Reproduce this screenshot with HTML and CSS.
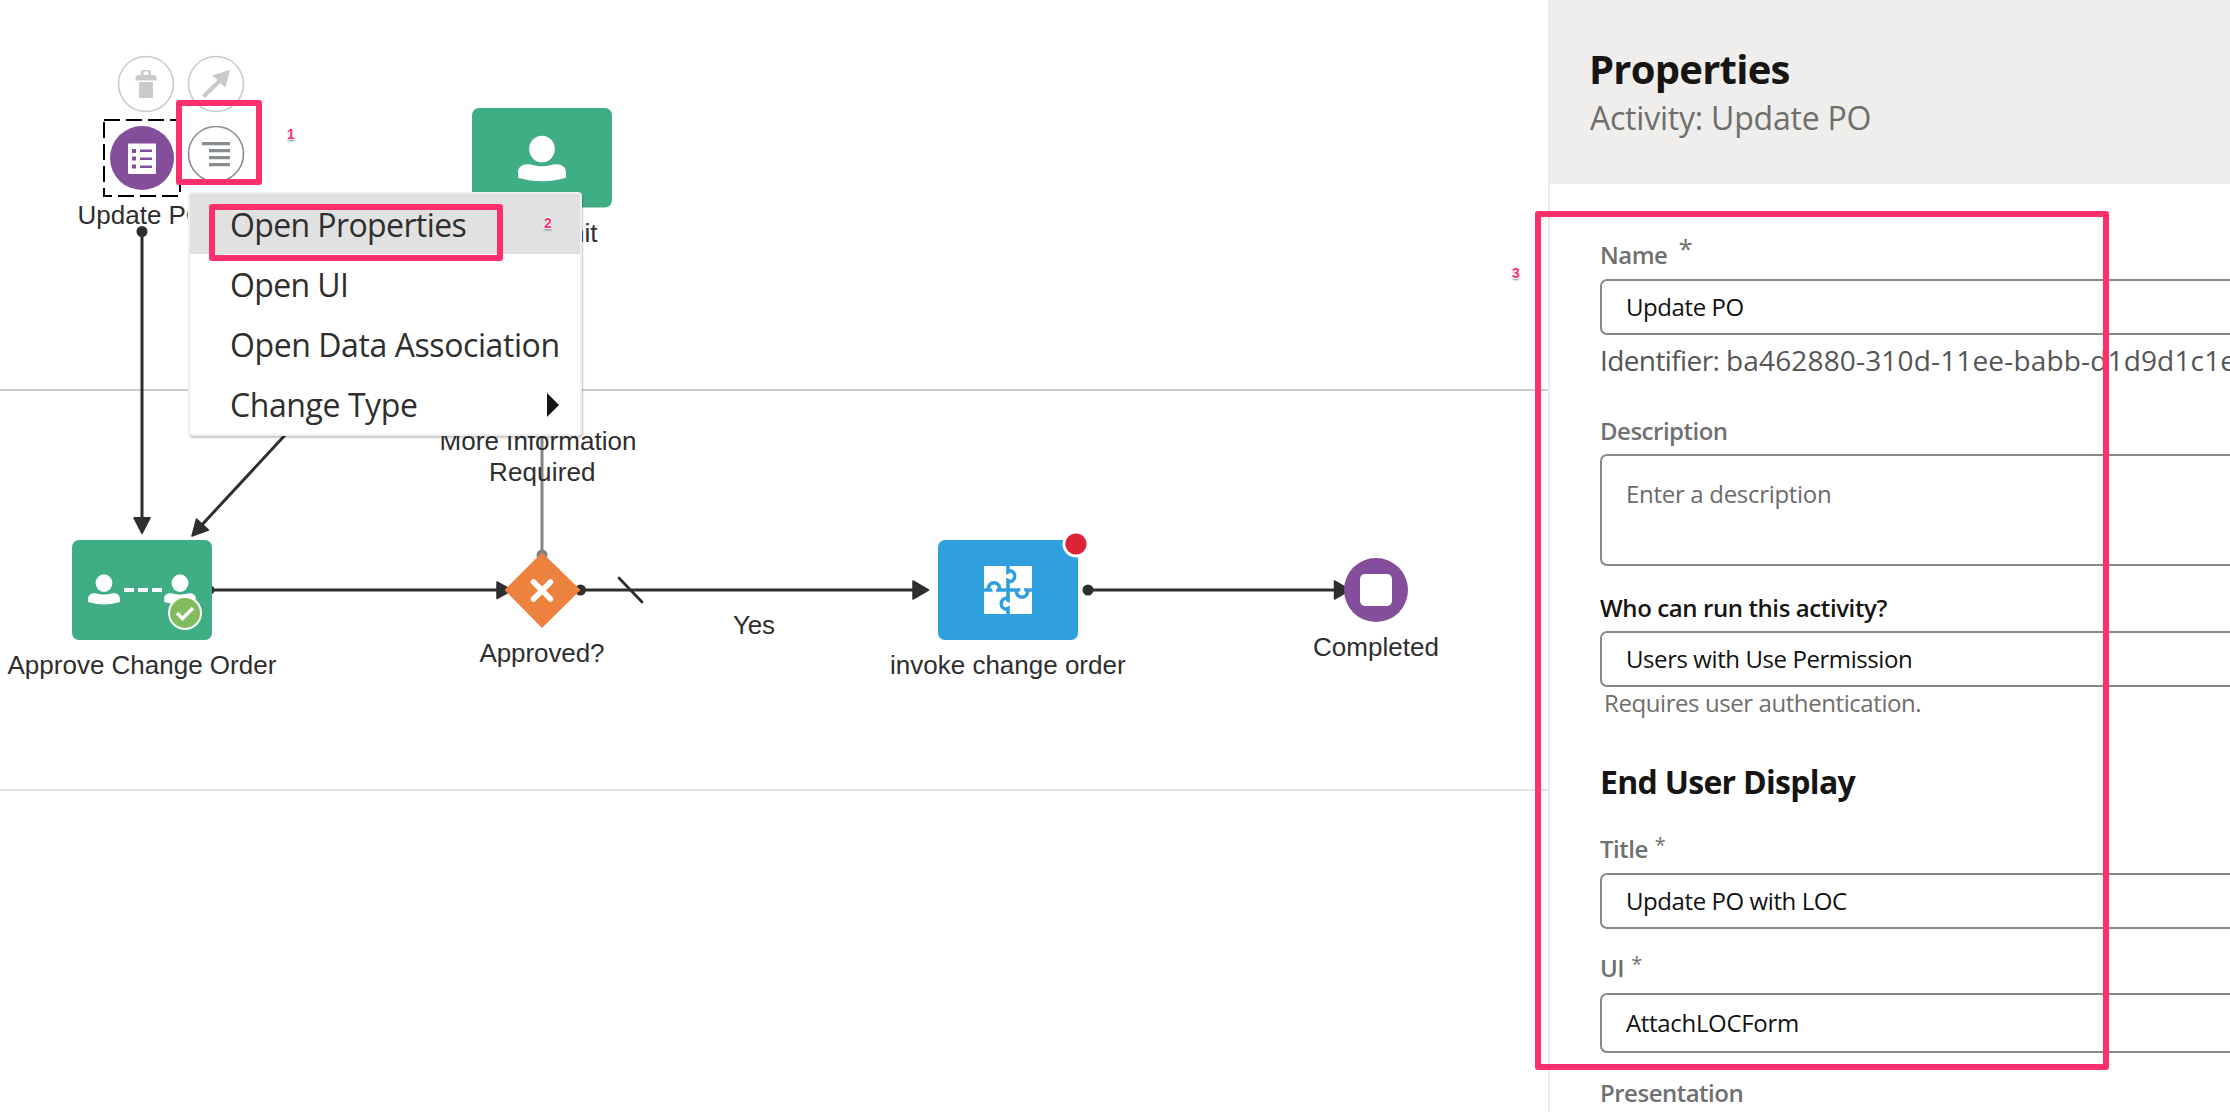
FILE: index.html
```
<!DOCTYPE html>
<html lang="en">
<head>
<meta charset="utf-8">
<title>Process Editor</title>
<link rel="stylesheet" href="styles.css">
</head>
<body>
<div class="app">
  <main class="canvas">
    <svg class="diagram" width="1548" height="1112" viewBox="0 0 1548 1112">
      <defs>
        <g id="person">
          <ellipse cx="0" cy="-15.3" rx="12.8" ry="13.3"/>
          <path d="M-24 13.5V8C-24 3-20 0-14 0C-9.500 0-7.500 2 0 2S9.500 0 14 0C20 0 24 3 24 8V13.500C8 18.200-8 18.200-24 13.500Z"/>
        </g>
      </defs>

      <!-- swimlane separators -->
      <path class="lane" d="M0 390H1548"/>
      <path class="lane lane-end" d="M0 790H1548"/>

      <!-- connectors -->
      <g class="flow">
        <path d="M142 231V520"/>
        <path d="M299 420L199 528"/>
        <path d="M212 590H500"/>
        <path d="M581 590H916"/>
        <path d="M1088 590H1338"/>
        <path class="slash" d="M619 578L642 602"/>
        <path class="flow-muted" d="M542 430V554"/>
      </g>
      <g class="heads">
        <circle cx="142" cy="231.500" r="5.500"/>
        <path d="M134 517.800H150L142 533.500Z"/>
        <path d="M192 536L196.500 519L208.500 530Z"/>
        <circle cx="209.500" cy="590" r="5"/>
        <path d="M497 582V598.500L512 590.300Z"/>
        <circle cx="580.500" cy="590" r="5.500"/>
        <path d="M913 581V599L928.500 590Z"/>
        <circle cx="1088" cy="590" r="5.500"/>
        <path d="M1334.500 581V599L1350 590Z"/>
      </g>
      <circle class="dot-muted" cx="542" cy="555" r="5.500"/>

      <!-- Update PO start event -->
      <path class="selection" d="M104 120H180V196H104Z"/>
      <circle class="event" cx="142" cy="158" r="32"/>
      <rect class="white" x="128" y="143.500" width="28" height="30.500" rx="1"/>
      <path class="event" d="M132 149h4v4h-4zM140 149.500h12v2.500h-12zM132 156.500h4v4h-4zM140 157.500h12v2.500h-12zM132 164.500h4v4h-4zM140 165.500h12v2.500h-12z"/>
      <text x="77.500" y="223.500">Update PO</text>

      <!-- Resubmit task -->
      <rect class="task" x="472" y="108" width="140" height="99.500" rx="7"/>
      <use class="white" href="#person" x="542" y="164.300"/>
      <text x="542.500" y="242" text-anchor="middle">Resubmit</text>

      <!-- Approve Change Order task -->
      <rect class="task" x="72" y="540" width="140" height="100" rx="7"/>
      <use class="white" href="#person" transform="translate(104 593.200) scale(.66)"/>
      <use class="white" href="#person" transform="translate(180 593.200) scale(.66)"/>
      <path class="white" d="M124 588h10v4h-10zM138 588h10v4h-10zM152 588h10v4h-10z"/>
      <circle class="white" cx="185" cy="613" r="17"/>
      <circle class="check-bg" cx="185" cy="613" r="15"/>
      <path class="check" d="M177 613L182.500 618.500L193 608"/>
      <text x="7.500" y="674">Approve Change Order</text>

      <!-- gateway -->
      <path class="gateway" d="M542 552.500L580.500 590L542 628L504.500 590Z"/>
      <path class="cross" d="M533.500 582L550.500 599M550.500 582L533.500 599"/>
      <text x="439.500" y="450" textLength="197">More Information</text>
      <text x="489" y="481" textLength="106.500">Required</text>
      <text x="479.500" y="662" textLength="125">Approved?</text>
      <text x="733" y="634" textLength="42">Yes</text>

      <!-- invoke change order task -->
      <rect class="service" x="938" y="540" width="140" height="100" rx="7"/>
      <g>
        <rect class="white" x="984" y="566" width="48" height="48"/>
        <path class="seam" d="M1008 566V614M984 590H1032"/>
        <path class="seam" d="M1008 571C1017 569 1017 583 1008 581.500M988.500 590C987 580.500 1001 580.500 999.500 590M1016.500 590C1015 599.500 1029 599.500 1027.500 590M1008 598.500C999 596.500 999 610.500 1008 609"/>
        <path class="white" d="M1004 574.500h5v3.500h-5zM992.500 587h3.500v6h-3.500zM1020.500 586h3.500v6h-3.500zM1006 602.500h6v3.500h-6z"/>
        <circle class="white" cx="1010" cy="576.200" r="2.800"/>
        <circle class="white" cx="994.200" cy="587.500" r="2.800"/>
        <circle class="white" cx="1022.200" cy="592.500" r="2.800"/>
        <circle class="white" cx="1006" cy="604.200" r="2.800"/>
      </g>
      <circle class="white" cx="1076" cy="544" r="13.500"/>
      <circle class="alert" cx="1076" cy="544" r="10.600"/>
      <text x="890" y="674">invoke change order</text>

      <!-- Completed end event -->
      <circle class="event" cx="1376" cy="590" r="32"/>
      <rect class="white" x="1360" y="574" width="32" height="32" rx="5"/>
      <text x="1313" y="656" textLength="126">Completed</text>

      <!-- contextual action buttons -->
      <g class="action">
        <circle cx="146" cy="84" r="27.500"/>
        <circle cx="216" cy="84" r="27.500"/>
        <circle class="action-active" cx="216" cy="154" r="27.500"/>
      </g>
      <g class="action-icon">
        <path fill-rule="evenodd" d="M141 75v-3q0-2 2-2h6q2 0 2 2v3h2.500q3 0 3 3v2.500h-21v-2.500q0-3 3-3zM143.500 75h5v-3.500h-5zM139 82h14v16h-14z"/>
        <path d="M230 70L225.500 87.500L220.500 83L205 98L202 95L217.500 80L212 75.500Z"/>
        <path class="action-icon-active" d="M202 142h28v3.300h-28zM209 149h21v3.300h-21zM209 156h21v3.300h-21zM209 163h21v3.300h-21z"/>
      </g>
    </svg>

    <ul class="menu">
      <li class="menu-item menu-item-active menu-item-properties">Open Properties</li>
      <li class="menu-item menu-item-ui">Open UI</li>
      <li class="menu-item">Open Data Association</li>
      <li class="menu-item">Change Type
        <svg class="submenu" width="12" height="24" viewBox="0 0 12 24"><path d="M0 0L12 12L0 24Z"/></svg>
      </li>
    </ul>
  </main>

  <aside class="panel">
    <header class="panel-header">
      <h1 class="panel-title">Properties</h1>
      <p class="panel-subtitle">Activity: Update PO</p>
    </header>
    <form class="form">
      <div class="label">Name<span class="req req-name">*</span></div>
      <div class="input">Update PO</div>
      <div class="identifier"><span class="identifier-key">Identifier: </span>ba462880-310d-11ee-babb-d1d9d1c1e</div>

      <div class="label label-description">Description</div>
      <div class="input textarea">Enter a description</div>

      <div class="label label-who">Who can run this activity?</div>
      <div class="input">Users with Use Permission</div>
      <div class="hint">Requires user authentication.</div>

      <h2 class="section">End User Display</h2>
      <div class="label label-title">Title<span class="req">*</span></div>
      <div class="input input-title">Update PO with LOC</div>

      <div class="label label-ui">UI<span class="req">*</span></div>
      <div class="input input-ui">AttachLOCForm</div>

      <div class="label label-presentation">Presentation</div>
    </form>
  </aside>

  <!-- numbered callouts -->
  <div class="callout callout-1"></div>
  <div class="callout callout-2"></div>
  <div class="callout callout-3"></div>
  <span class="step step-1">1</span>
  <span class="step step-2">2</span>
  <span class="step step-3">3</span>
</div>
</body>
</html>
```
FILE: styles.css
```
* { box-sizing: border-box; }

body {
  margin: 0;
  background: #fff;
  font-family: "Open Sans", "Noto Sans", sans-serif;
}

.app {
  position: relative;
  display: flex;
  width: 2230px;
  height: 1112px;
  overflow: hidden;
}

/* canvas */
.canvas {
  position: relative;
  flex: 0 0 1548px;
  height: 1112px;
}

.diagram { display: block; }

.diagram text {
  font: 26px "Liberation Sans", Arial, sans-serif;
  fill: #2e2e2e;
}

.lane { stroke: #cccccc; stroke-width: 2; }
.lane-end { stroke: #e3e3e3; }
.flow path { stroke: #2e2e2e; stroke-width: 3; fill: none; }
.flow .slash { stroke-width: 2.8; stroke-linecap: round; }
.flow .flow-muted { stroke: #858585; stroke-width: 3; }
.heads { fill: #2e2e2e; stroke: #2e2e2e; stroke-width: 1.5; stroke-linejoin: round; }
.heads circle { stroke: none; }
.dot-muted { fill: #808080; }
.selection { fill: none; stroke: #000; stroke-width: 2; stroke-dasharray: 16 6; }
.event { fill: #854e9b; }
.white { fill: #fff; }
.task { fill: #3fae85; }
.service { fill: #309fdd; }
.gateway { fill: #ed813e; }
.cross { stroke: #fff; stroke-width: 5.5; stroke-linecap: round; }
.seam { fill: none; stroke: #309fdd; stroke-width: 3.6; }
.alert { fill: #de2434; }
.check-bg { fill: #81bc5f; }
.check { fill: none; stroke: #fff; stroke-width: 3.4; }
.action circle { fill: #fff; stroke: #cacaca; stroke-width: 1.6; }
.action .action-active { stroke: #878d91; }
.action-icon { fill: #cacaca; }
.action-icon-active { fill: #868c90; }

/* context menu */
.menu {
  position: absolute;
  left: 188px;
  top: 192px;
  width: 394px;
  height: 244px;
  margin: 0;
  padding: 0;
  list-style: none;
  background: #fff;
  border: 2px solid #efefef;
  border-radius: 4px;
  box-shadow: 1px 2px 2px rgba(0, 0, 0, .22);
}

.menu-item {
  display: flex;
  align-items: center;
  justify-content: space-between;
  height: 60px;
  padding: 2px 21px 0 40px;
  font-size: 32px;
  line-height: 44px;
  letter-spacing: -.42px;
  color: #2e2e2e;
  white-space: nowrap;
}

.menu-item-active { background: #e1e1e1; }
.menu-item-properties,
.menu-item-ui { letter-spacing: -.61px; }
.submenu { fill: #161513; }

/* properties panel */
.panel {
  flex: 1 1 0;
  min-width: 0;
  border-left: 2px solid #e9ebeb;
  overflow: hidden;
}

.panel-header {
  height: 184px;
  padding: 45px 0 0 40px;
  background: #efeeec;
}

.panel-title {
  margin: 0 0 5px -1px;
  font-size: 40px;
  line-height: 48px;
  font-weight: 700;
  letter-spacing: -.76px;
  color: #161513;
}

.panel-subtitle {
  margin: 0;
  font-size: 32px;
  line-height: 40px;
  letter-spacing: -.22px;
  color: #6f6e6b;
}

.form { padding: 55px 0 0 50px; }

.label {
  margin: 0 0 8px 0;
  font-size: 24px;
  line-height: 32px;
  font-weight: 600;
  letter-spacing: -.5px;
  color: #707070;
}

.label-description { margin: 37px 0 7px 0; }
.label-who { margin: 26px 0 7px 0; letter-spacing: -.4px; color: #161513; }
.label-title { margin: 31px 0 8px 0; }
.label-ui { margin: 23px 0 9px 0; }
.label-presentation { margin: 24px 0 0 0; }

.req {
  position: relative;
  top: -6px;
  margin-left: 7px;
  font-size: 20px;
  line-height: 20px;
  font-weight: 400;
}

.req-name { top: -6px; margin-left: 11px; font-size: 26px; }

.input {
  display: flex;
  align-items: center;
  width: 700px;
  height: 56px;
  padding-left: 24px;
  border: 2px solid #888;
  border-radius: 7px;
  background: #fff;
  font-size: 24px;
  line-height: 32px;
  letter-spacing: -.42px;
  color: #111;
  white-space: nowrap;
}

.textarea {
  align-items: flex-start;
  height: 112px;
  padding-top: 22px;
  letter-spacing: -.3px;
  color: #6b6b6b;
}

.input-ui { height: 60px; letter-spacing: -.32px; }

.identifier {
  margin: 7px 0 0 0;
  font-size: 28px;
  line-height: 36px;
  letter-spacing: .16px;
  color: #555;
  white-space: nowrap;
}

.identifier-key { letter-spacing: -.6px; }

.hint {
  margin-left: 4px;
  font-size: 24px;
  line-height: 32px;
  letter-spacing: -.42px;
  color: #6f6e6b;
}

.section {
  margin: 43px 0 0 0;
  font-size: 32px;
  line-height: 40px;
  font-weight: 700;
  letter-spacing: -.7px;
  color: #161513;
}

/* callouts drawn over the page */
.callout {
  position: absolute;
  border: 6px solid #ff2e6c;
  border-radius: 3px;
}

.callout-1 { left: 176px; top: 99.5px; width: 86px; height: 85.5px; }
.callout-2 { left: 209px; top: 203.5px; width: 294px; height: 57px; }
.callout-3 { left: 1535px; top: 210.5px; width: 574px; height: 859.5px; }

.step {
  position: absolute;
  width: 20px;
  text-align: center;
  font: 700 14px/16px "Liberation Sans", Arial, sans-serif;
  color: #ff2e6c;
  text-shadow: -1px -1px 1px #fff, 1px -1px 1px #fff, 1px 1px 1px #fff, -1px 1px 1px #fff, 0 2px 2px rgba(0, 0, 0, .6);
}

.step-1 { left: 281px; top: 126px; }
.step-2 { left: 538px; top: 215px; }
.step-3 { left: 1506px; top: 265px; }
```
